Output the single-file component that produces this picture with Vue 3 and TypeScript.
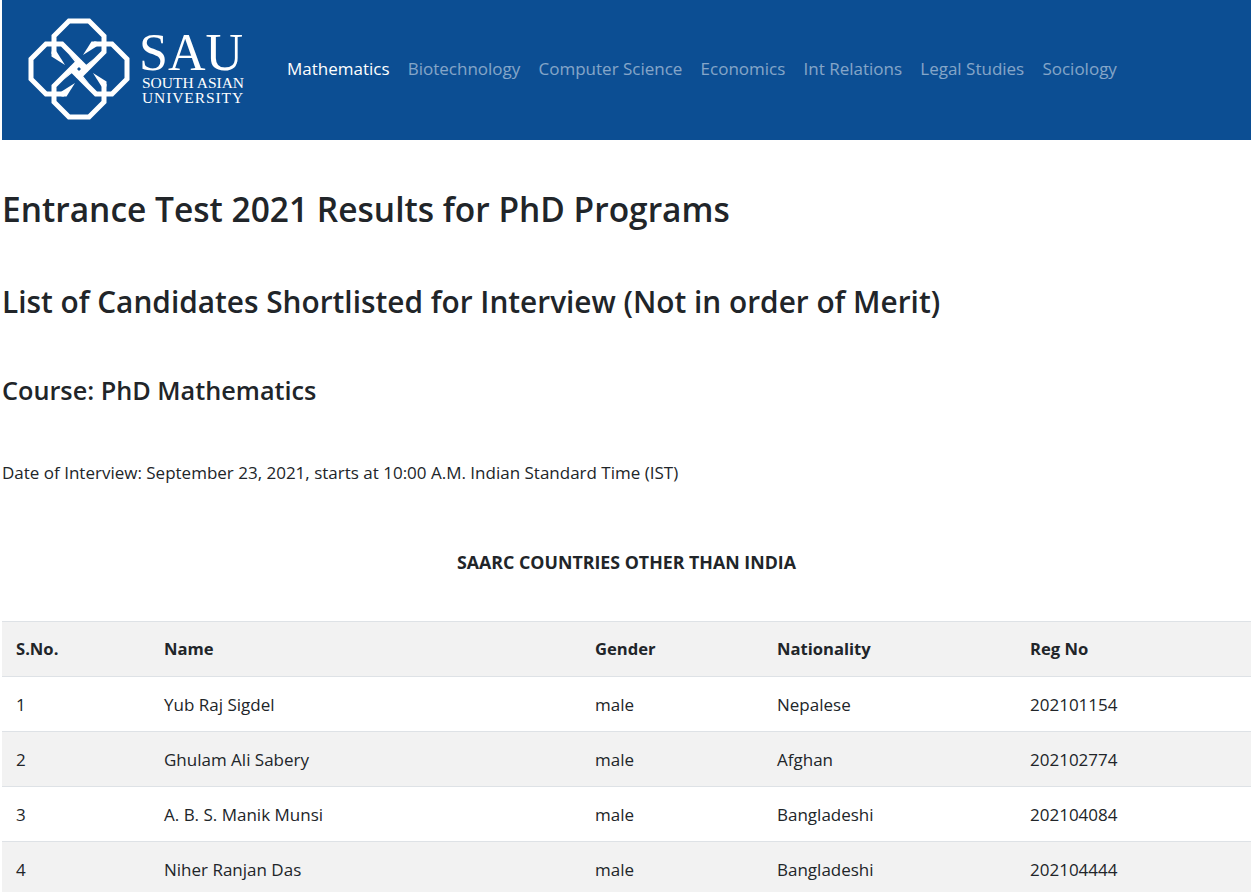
<template>
  <div class="page">
    <header class="navbar">
      <a class="brand" href="#">
        <svg class="mark" viewBox="-55 -55 110 110" width="110" height="110" aria-hidden="true">
          <g v-for="angle in [0, 90, 180, 270]" :key="angle" :transform="`rotate(${angle})`">
            <path
              d="M-25 -15V-33L-10 -48H10L25 -33V-17L0 8"
              fill="none"
              stroke="#fff"
              stroke-width="5"
            />
            <path d="M15 -10.5L1.5 0.5L-3 5L-3 9Z" fill="#fff" />
            <path d="M-22.5 -17.5L-14 -4L-27.5 -12.5V-17.5Z" fill="#fff" />
          </g>
        </svg>
        <span class="wordmark">
          <span class="abbr">SAU</span>
          <span class="full">SOUTH ASIAN</span>
          <span class="full wide">UNIVERSITY</span>
        </span>
      </a>
      <nav class="nav">
        <a
          v-for="(item, i) in navItems"
          :key="item"
          href="#"
          :class="['nav-link', { active: i === 0 }]"
        >{{ item }}</a>
      </nav>
    </header>

    <main class="content">
      <h1>Entrance Test 2021 Results for PhD Programs</h1>
      <h2>List of Candidates Shortlisted for Interview (Not in order of Merit)</h2>
      <h3>Course: PhD Mathematics</h3>
      <p class="date">Date of Interview: September 23, 2021, starts at 10:00 A.M. Indian Standard Time (IST)</p>
      <p class="group">SAARC COUNTRIES OTHER THAN INDIA</p>

      <table class="results">
        <thead>
          <tr>
            <th class="c-no">S.No.</th>
            <th class="c-name">Name</th>
            <th class="c-gender">Gender</th>
            <th class="c-nat">Nationality</th>
            <th>Reg No</th>
          </tr>
        </thead>
        <tbody>
          <tr v-for="row in rows" :key="row.reg">
            <td>{{ row.no }}</td>
            <td>{{ row.name }}</td>
            <td>{{ row.gender }}</td>
            <td>{{ row.nationality }}</td>
            <td>{{ row.reg }}</td>
          </tr>
        </tbody>
      </table>
    </main>
  </div>
</template>

<script setup lang="ts">
const navItems = [
  "Mathematics",
  "Biotechnology",
  "Computer Science",
  "Economics",
  "Int Relations",
  "Legal Studies",
  "Sociology",
];

const rows = [
  { no: 1, name: "Yub Raj Sigdel", gender: "male", nationality: "Nepalese", reg: "202101154" },
  { no: 2, name: "Ghulam Ali Sabery", gender: "male", nationality: "Afghan", reg: "202102774" },
  { no: 3, name: "A. B. S. Manik Munsi", gender: "male", nationality: "Bangladeshi", reg: "202104084" },
  { no: 4, name: "Niher Ranjan Das", gender: "male", nationality: "Bangladeshi", reg: "202104444" },
];
</script>

<style>
html,
body {
  margin: 0;
  background: #fff;
  overflow: hidden;
}
</style>

<style scoped>
.page {
  height: 892px;
  overflow: hidden;
  padding: 0 4px 0 2px;
  font-family: "Open Sans", "Noto Sans", sans-serif;
  color: #212529;
}

.navbar {
  display: flex;
  align-items: center;
  height: 140px;
  background: #0c4e93;
  padding-left: 22px;
}

.brand {
  display: flex;
  align-items: center;
  gap: 8px;
  color: #fff;
  text-decoration: none;
}

.mark {
  margin-bottom: 2px;
}

.wordmark {
  display: flex;
  flex-direction: column;
  width: 102px;
  margin-bottom: 4px;
  font-family: "Liberation Serif", serif;
  line-height: 1;
  white-space: nowrap;
}

.abbr {
  margin-left: -3px;
  font-size: 52px;
  line-height: 44px;
}

.full {
  font-size: 15.5px;
  line-height: 15px;
}

.full.wide {
  letter-spacing: 0.9px;
}

.nav {
  display: flex;
  gap: 18.2px;
  margin-left: 43px;
  margin-bottom: 3px;
}

.nav-link {
  font-size: 17px;
  color: rgba(255, 255, 255, 0.5);
  text-decoration: none;
}

.nav-link.active {
  color: #fff;
}

h1,
h2,
h3 {
  margin: 0;
  font-weight: 600;
}

h1 {
  padding-top: 46px;
  font-size: 33.5px;
  line-height: 46px;
}

h2 {
  padding-top: 50px;
  font-size: 29.8px;
  line-height: 40px;
}

h3 {
  padding-top: 51px;
  font-size: 25.25px;
  line-height: 34px;
}

.date {
  margin: 54px 0 0;
  font-size: 17px;
  line-height: 24px;
}

.group {
  margin: 65px 0 0;
  font-size: 17.8px;
  line-height: 24px;
  font-weight: 700;
  text-align: center;
}

.results {
  width: 100%;
  margin-top: 47px;
  border-collapse: collapse;
  font-size: 17px;
}

.results th,
.results td {
  height: 55px;
  padding: 0 14px;
  border-top: 1px solid #dee2e6;
  text-align: left;
  box-sizing: border-box;
}

.results th {
  padding-bottom: 2px;
  font-size: 16.6px;
  font-weight: 700;
}

.results thead tr,
.results tbody tr:nth-child(even) {
  background: #f2f2f2;
}

.c-no {
  width: 148px;
}

.c-name {
  width: 431px;
}

.c-gender {
  width: 182px;
}

.c-nat {
  width: 253px;
}
</style>
